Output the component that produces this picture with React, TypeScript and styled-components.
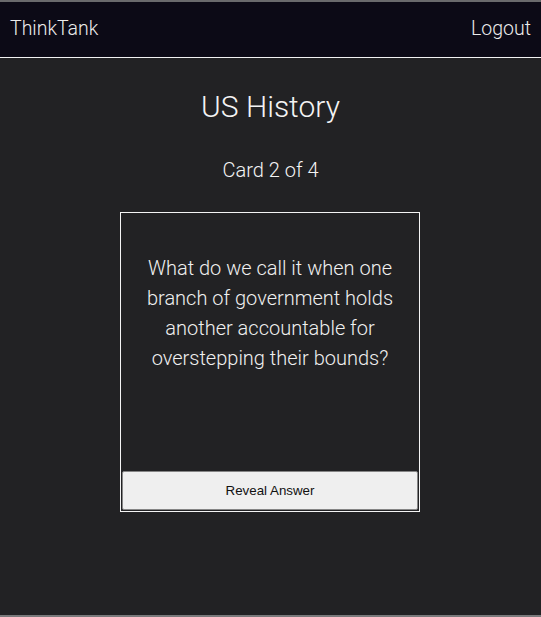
import React from 'react';
import styled, { createGlobalStyle } from 'styled-components';

const GlobalStyle = createGlobalStyle`
  html, body {
    margin: 0;
    padding: 0;
    background: #222224;
  }
  body {
    font-family: Roboto, "Liberation Sans", sans-serif;
  }
`;

const Frame = styled.div`
  height: 617px;
  box-sizing: border-box;
  border-top: 2px solid #6a6a6c;
  border-bottom: 2px solid #7a7a7c;
  display: flex;
  flex-direction: column;
  background: #222224;
`;

const NavBar = styled.nav`
  height: 55px;
  display: flex;
  align-items: center;
  justify-content: space-between;
  padding: 0 10px;
  background: #0c0a16;
  border-bottom: 1px solid #f2f2f2;
  color: #ececec;
  font-weight: 300;
  font-size: 19.5px;
`;

const NavLink = styled.span`
  cursor: pointer;
  padding-bottom: 3px;
`;

const Main = styled.main`
  flex: 1;
  display: flex;
  flex-direction: column;
  align-items: center;
  color: #f4f4f4;
`;

const DeckTitle = styled.h1`
  margin: 31px 0 0;
  font-size: 30px;
  line-height: 36px;
  font-weight: 300;
`;

const Progress = styled.div`
  margin-top: 33px;
  font-size: 20px;
  line-height: 24px;
  font-weight: 300;
`;

const Card = styled.div`
  margin: 30px 1px 0 0;
  width: 300px;
  height: 300px;
  box-sizing: border-box;
  border: 1px solid #f4f4f4;
  display: flex;
  flex-direction: column;
  padding: 0 1px 1px 1px;
`;

const Question = styled.p`
  flex: 1;
  margin: 0;
  padding: 40px 18px 0;
  text-align: center;
  font-size: 20px;
  line-height: 30px;
  font-weight: 300;
  color: #f0f0f0;
`;

const RevealButton = styled.button`
  height: 39px;
  width: 100%;
  box-sizing: border-box;
  background: #efefef;
  border: 1px solid #858585;
  border-radius: 2px;
  font-family: "Liberation Sans", Arial, sans-serif;
  font-size: 13.33px;
  color: #111;
  cursor: pointer;
`;

export default function App() {
  return (
    <>
      <GlobalStyle />
      <Frame>
        <NavBar>
          <NavLink>ThinkTank</NavLink>
          <NavLink>Logout</NavLink>
        </NavBar>
        <Main>
          <DeckTitle>US History</DeckTitle>
          <Progress>Card 2 of 4</Progress>
          <Card>
            <Question>
              What do we call it when one branch of government holds another
              accountable for overstepping their bounds?
            </Question>
            <RevealButton>Reveal Answer</RevealButton>
          </Card>
        </Main>
      </Frame>
    </>
  );
}
